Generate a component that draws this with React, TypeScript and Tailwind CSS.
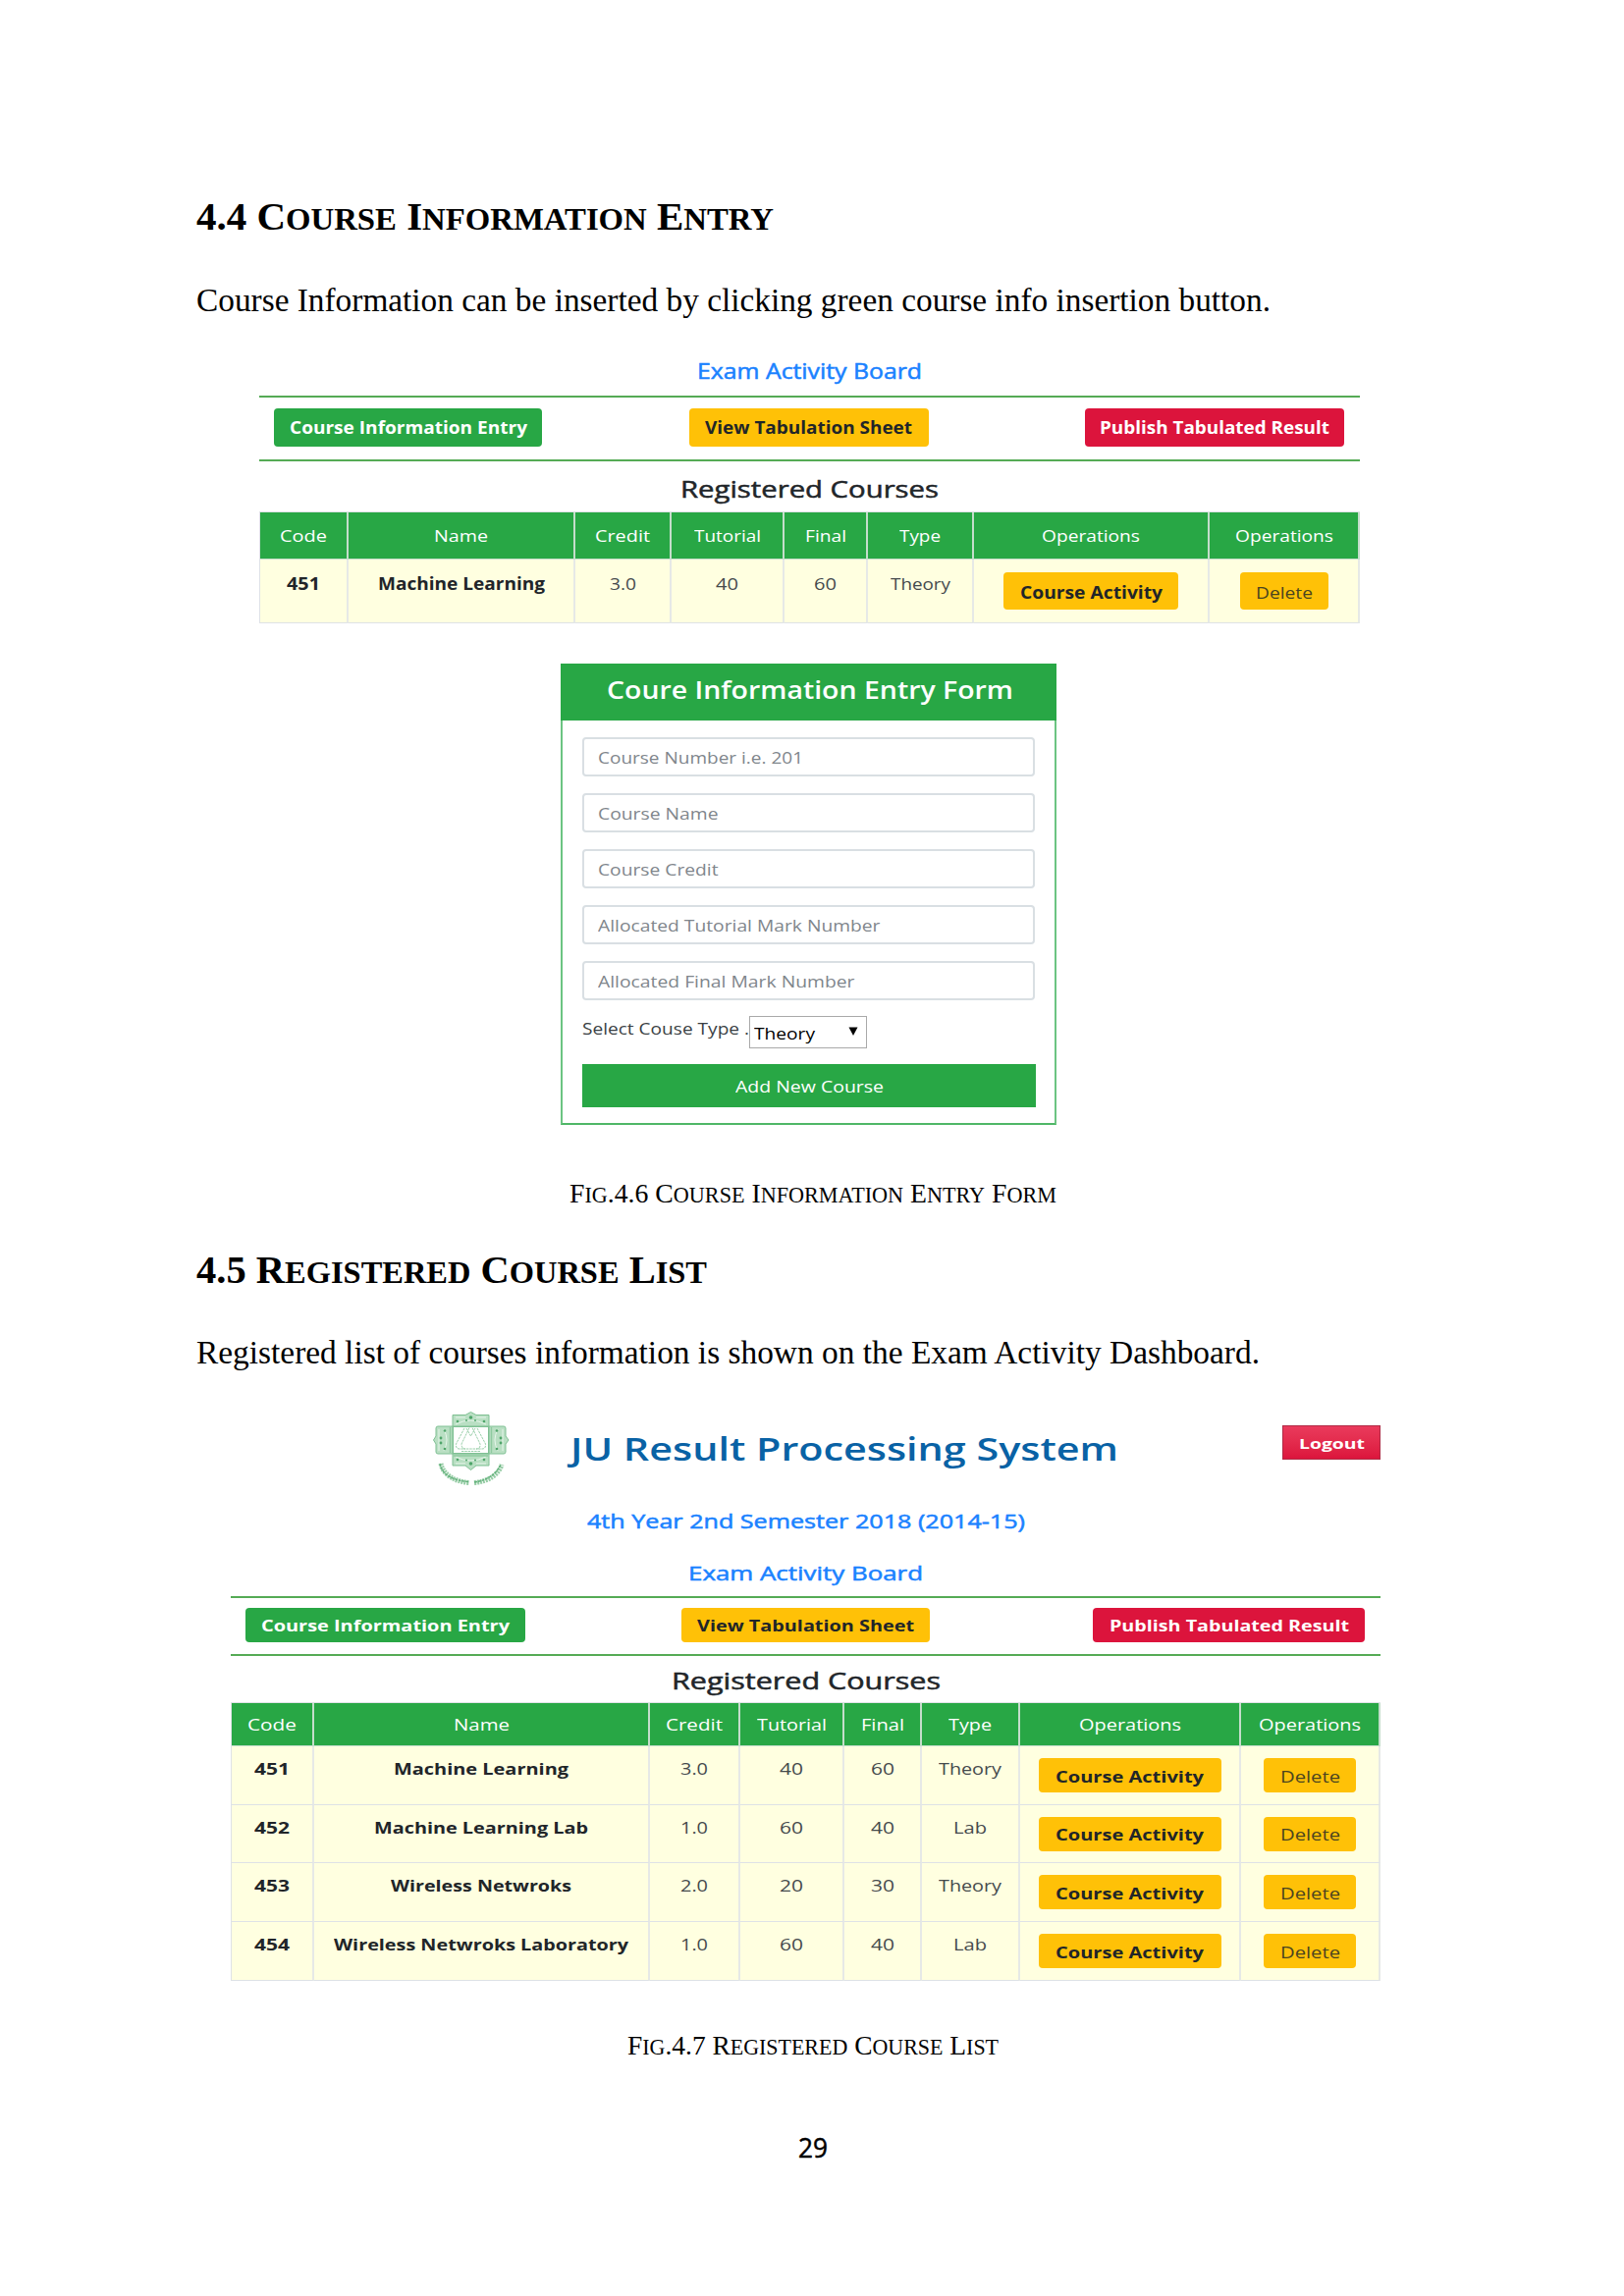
import { useLayoutEffect, useRef, useState } from "react";
import type { ReactNode } from "react";

/** Single line of text stretched horizontally to an exact width. */
function Fit({ w, children }: { w: number; children: ReactNode }) {
  const ref = useRef<HTMLSpanElement>(null);
  const [k, setK] = useState(1);
  useLayoutEffect(() => {
    if (ref.current) setK(w / ref.current.getBoundingClientRect().width);
    // measured once, while the scale is still 1
  }, []);
  return (
    <span className="inline-block text-left whitespace-nowrap" style={{ width: w }}>
      <span ref={ref} className="inline-block origin-left" style={{ transform: `scaleX(${k})` }}>
        {children}
      </span>
    </span>
  );
}

/** Capitals with the lower-case letters as smaller capitals. */
function SmallCaps({ text }: { text: string }) {
  const parts = text.match(/[a-z]+|[^a-z]+/g) ?? [];
  return (
    <>
      {parts.map((p, i) =>
        /[a-z]/.test(p) ? (
          <span key={i} className="text-[0.8em]">
            {p.toUpperCase()}
          </span>
        ) : (
          <span key={i}>{p}</span>
        ),
      )}
    </>
  );
}

const serif = "font-['Liberation_Serif',serif] text-black";
const medium = "[-webkit-text-stroke:0.5px_currentColor]";

function Heading({ text, w, className }: { text: string; w: number; className: string }) {
  return (
    <h2 className={`${serif} ml-[200px] h-[46px] text-[39px] leading-[46px] font-bold ${className}`}>
      <Fit w={w}>
        <SmallCaps text={text} />
      </Fit>
    </h2>
  );
}

function Paragraph({ text, w, className }: { text: string; w: number; className: string }) {
  return (
    <p className={`${serif} ml-[200px] h-[40px] text-[33.3px] leading-[40px] ${className}`}>
      <Fit w={w}>{text}</Fit>
    </p>
  );
}

function Caption({ text, w, className }: { text: string; w: number; className: string }) {
  return (
    <p className={`${serif} h-[34px] pl-px text-center text-[27.8px] leading-[34px] ${className}`}>
      <Fit w={w}>
        <SmallCaps text={text} />
      </Fit>
    </p>
  );
}

type Label = [string, number];

type BoardProps = {
  className: string;
  rule: string;
  button: string;
  buttonWidths: [string, string, string];
  labels: [Label, Label, Label];
  title: string;
  titleWidth: number;
  cols: string;
  headHeight: string;
  head: Label[];
  rowHeight: string;
  textPad: string;
  rows: Label[][];
  activity: string;
  activityWidth: number;
  remove: string;
  removeWidth: number;
};

function Board(p: BoardProps) {
  return (
    <div className={p.className}>
      <div className={`grid grid-cols-3 border-y-2 pr-[16px] pl-[15px] font-bold ${p.rule}`}>
        <button className={`rounded-[4px] bg-[#28a745] text-white ${p.button} ${p.buttonWidths[0]}`}>
          <Fit w={p.labels[0][1]}>{p.labels[0][0]}</Fit>
        </button>
        <button className={`justify-self-center rounded-[4px] bg-[#ffc107] text-[#212529] ${p.button} ${p.buttonWidths[1]}`}>
          <Fit w={p.labels[1][1]}>{p.labels[1][0]}</Fit>
        </button>
        <button className={`justify-self-end rounded-[4px] bg-[#dc143c] text-white ${p.button} ${p.buttonWidths[2]}`}>
          <Fit w={p.labels[2][1]}>{p.labels[2][0]}</Fit>
        </button>
      </div>
      <h4 className={`h-8 text-center leading-8 text-[#212529] ${medium} ${p.title}`}>
        <Fit w={p.titleWidth}>Registered Courses</Fit>
      </h4>
      <div className="border-t border-l border-[#dee2e6]">
        <div className={`grid bg-[#28a745] text-white ${p.cols} ${p.headHeight}`}>
          {p.head.map(([t, w], i) => (
            <div key={i} className="flex items-center justify-center border-r-2 border-b border-[#c4ddcb] pt-px">
              <Fit w={w}>{t}</Fit>
            </div>
          ))}
        </div>
        {p.rows.map((row, r) => (
          <div key={r} className={`grid bg-[#ffffe0] text-[#454a4d] ${p.cols} ${p.rowHeight}`}>
            {row.map(([t, w], i) => (
              <div
                key={i}
                className={`flex items-start justify-center border-r-2 border-b border-r-[#e6e9e6] border-b-[#dee2e6] leading-6 ${p.textPad} ${i < 2 ? "font-bold text-[#212529]" : ""}`}
              >
                <Fit w={w}>{t}</Fit>
              </div>
            ))}
            <div className={`flex items-start justify-center border-r-2 border-b border-r-[#e6e9e6] border-b-[#dee2e6] ${p.textPad}`}>
              <button className={`rounded-[4px] bg-[#ffc107] font-bold text-[#212529] ${p.activity}`}>
                <Fit w={p.activityWidth}>Course Activity</Fit>
              </button>
            </div>
            <div className={`flex items-start justify-center border-r-2 border-b border-r-[#e6e9e6] border-b-[#dee2e6] ${p.textPad}`}>
              <button className={`rounded-[4px] bg-[#ffc107] text-[#4a4420] ${p.remove}`}>
                <Fit w={p.removeWidth}>Delete</Fit>
              </button>
            </div>
          </div>
        ))}
      </div>
    </div>
  );
}

const fields: Label[] = [
  ["Course Number i.e. 201", 209],
  ["Course Name", 122.5],
  ["Course Credit", 122.5],
  ["Allocated Tutorial Mark Number", 287.5],
  ["Allocated Final Mark Number", 261.5],
];

function EntryForm() {
  return (
    <form className="mt-[41px] ml-[571px] h-[470px] w-[505px] border-x-2 border-b-2 border-x-[#6cc482] border-b-[#4fb767] text-[17px]">
      <h3 className="-mx-[2px] h-[58px] bg-[#28a745] pl-[2px] text-center text-[24.5px] leading-[54px] font-semibold text-white">
        <Fit w={414}>Coure Information Entry Form</Fit>
      </h3>
      <div className="mx-5 mt-[17px] flex flex-col gap-[17.2px]">
        {fields.map(([t, w]) => (
          <div
            key={t}
            className="flex h-[39.8px] items-center rounded-[4px] border-2 border-[#d9dfe3] pt-[2px] pl-[14px] text-[#7f868c]"
          >
            <Fit w={w}>{t}</Fit>
          </div>
        ))}
      </div>
      <div className="mx-5 mt-[16px] flex h-[33px] items-start text-[#3a3f44]">
        <span className="mt-px leading-6">
          <Fit w={170}>Select Couse Type .</Fit>
        </span>
        <div className="flex h-[33px] w-[120px] items-center justify-between border-[1.5px] border-[#a9a9a9] bg-white pt-[4px] pr-2 pl-1 text-black">
          <Fit w={62}>Theory</Fit>
          <svg viewBox="0 0 10 9" className="mb-[5px] h-[9px] w-[10px]">
            <path d="M0.500 0.500H9.500L5 9Z" />
          </svg>
        </div>
      </div>
      <button type="button" className="mt-[16px] ml-[19.5px] h-[44px] w-[462px] bg-[#28a745] pt-[3px] pl-px text-white">
        <Fit w={151}>Add New Course</Fit>
      </button>
    </form>
  );
}

function Crest() {
  return (
    <svg viewBox="0 0 78 76" className="h-[76px] w-[78px]" fill="none" stroke="#7fc093">
      <g fill="#b9dfc3" strokeWidth="1">
        <path d="M20 3.5H33L38.5 0.5L44 3.5H57V15H20Z" />
        <path d="M20 43H57V55H44L38.5 59.5L33 55H20Z" />
        <path d="M20 15V43H5Q3 43 3 41V33L0.5 29L3 25V17Q3 15 5 15Z" />
        <path d="M57 15V43H72Q74 43 74 41V33L77 29L74 25V17Q74 15 72 15Z" />
      </g>
      <rect x="20.5" y="15.5" width="36" height="27" fill="#fff" />
      <g stroke="#e6f5ea" strokeWidth="1">
        <path d="M23 6H33M44 6H54M23 13Q38 5 54 13M23 46Q38 54 54 46M23 53H33M44 53H54" />
        <path d="M6 18V40M11 18Q17 29 11 40M71 18V40M66 18Q60 29 66 40" />
      </g>
      <path d="M17.5 16V42M59.5 16V42M21 45H56" stroke="#8fcaa0" strokeWidth="1.4" />
      <g fill="#4fa56a" stroke="none">
        <circle cx="25" cy="10" r="1.3" />
        <circle cx="52" cy="10" r="1.3" />
        <circle cx="38.5" cy="6" r="1.8" />
        <circle cx="34" cy="9" r="1" />
        <circle cx="43" cy="9" r="1" />
        <circle cx="25" cy="49" r="1.3" />
        <circle cx="52" cy="49" r="1.3" />
        <circle cx="38.5" cy="53" r="1.8" />
        <circle cx="34" cy="49.5" r="1" />
        <circle cx="43" cy="49.5" r="1" />
        <circle cx="12" cy="19.5" r="1.3" />
        <circle cx="8" cy="27" r="1.4" />
        <circle cx="8" cy="32" r="1.4" />
        <circle cx="12" cy="38" r="1.3" />
        <circle cx="65" cy="19.5" r="1.3" />
        <circle cx="69" cy="27" r="1.4" />
        <circle cx="69" cy="32" r="1.4" />
        <circle cx="65" cy="38" r="1.3" />
      </g>
      <g stroke="#8fcaa0" strokeWidth="0.9" strokeDasharray="2.5 0.8">
        <path d="M32 17L23.5 33Q23 38 27 38H33M45 17L53.5 33Q54 38 50 38H44" />
        <path d="M37 16.5L29 33Q29 38 33 38H44Q48.5 38 48 33L40 16.5" />
        <path d="M34 17L38.5 25L43 17M29 40.5H48" />
      </g>
      <g strokeWidth="5">
        <path d="M8 53C10 64 22 71.5 37 72.5" stroke="#97cda6" strokeDasharray="2 0.9" />
        <path d="M42 72.5C57 71 67 64 70 54" stroke="#97cda6" strokeDasharray="2 0.9" />
      </g>
      <g stroke="#62b07a" strokeWidth="1.4">
        <path d="M7 53C9.5 65 21 70.5 37 71.5" strokeDasharray="3 0.8" />
        <path d="M42 72C56 70 65 63 69 54" strokeDasharray="3 0.8" />
      </g>
    </svg>
  );
}

export default function App() {
  return (
    <div className="flex h-[2339px] w-[1654px] flex-col overflow-hidden bg-white font-['Open_Sans','Noto_Sans',sans-serif]">
      <Heading text="4.4 Course Information Entry" w={588} className="mt-[198px]" />
      <Paragraph
        text="Course Information can be inserted by clicking green course info insertion button."
        w={1094}
        className="mt-[42px]"
      />
      <h4 className={`mt-[38px] ml-[264px] h-7 w-[1121px] text-center text-[21px] leading-7 text-[#1a82ff] ${medium}`}>
        <Fit w={229}>Exam Activity Board</Fit>
      </h4>
      <Board
        className="mt-[11px] ml-[264px] w-[1121px] text-[17px]"
        rule="h-[67px] border-[#55ab55] pt-[11px]"
        button="h-[39px]"
        buttonWidths={["w-[273px]", "w-[244px]", "w-[264px]"]}
        labels={[
          ["Course Information Entry", 242],
          ["View Tabulation Sheet", 211],
          ["Publish Tabulated Result", 234],
        ]}
        title="mt-[12px] mb-[7px] text-[24.5px]"
        titleWidth={263}
        cols="grid-cols-[90px_231px_98px_115px_85px_108px_240px_153px]"
        headHeight="h-[48px]"
        head={[
          ["Code", 48],
          ["Name", 55],
          ["Credit", 56],
          ["Tutorial", 68],
          ["Final", 42],
          ["Type", 42],
          ["Operations", 100],
          ["Operations", 100],
        ]}
        rowHeight="h-[65px]"
        textPad="pt-[13px]"
        rows={[
          [
            ["451", 34],
            ["Machine Learning", 170],
            ["3.0", 27],
            ["40", 23],
            ["60", 23],
            ["Theory", 61],
          ],
        ]}
        activity="h-[38px] w-[178px] pt-[3px]"
        activityWidth={145}
        remove="h-[38px] w-[90px] pt-[3px]"
        removeWidth={58}
      />
      <EntryForm />
      <Caption text="Fig.4.6 Course Information Entry Form" w={496} className="mt-[53px]" />
      <Heading text="4.5 Registered Course List" w={520} className="mt-[38px]" />
      <Paragraph
        text="Registered list of courses information is shown on the Exam Activity Dashboard."
        w={1083}
        className="mt-[41px]"
      />
      <header className="mt-[40px] ml-[441px] flex h-[76px] w-[965px] items-start">
        <Crest />
        <h1 className="mt-[18px] ml-[62px] text-[32px] leading-10 font-semibold text-[#0962a5]">
          <Fit w={558}>JU Result Processing System</Fit>
        </h1>
        <button className="mt-[14px] ml-auto h-[35px] w-[100px] border-[1.5px] border-[#b02a45] bg-linear-to-b from-[#ea3a5c] to-[#dc143c] pt-px text-[15px] font-bold text-white">
          <Fit w={67}>Logout</Fit>
        </button>
      </header>
      <h4 className={`mt-[23px] ml-[235px] h-[26px] w-[1171px] text-center text-[19.5px] leading-[26px] text-[#1a82ff] ${medium}`}>
        <Fit w={446}>4th Year 2nd Semester 2018 (2014-15)</Fit>
      </h4>
      <h4 className={`mt-[27px] ml-[235px] h-[26px] w-[1171px] text-center text-[20px] leading-[26px] text-[#1a82ff] ${medium}`}>
        <Fit w={239}>Exam Activity Board</Fit>
      </h4>
      <Board
        className="mt-[10px] ml-[235px] w-[1171px] text-[16px]"
        rule="h-[61px] border-[#55ab55] pt-[10px]"
        button="h-[35px]"
        buttonWidths={["w-[285px]", "w-[253px]", "w-[277px]"]}
        labels={[
          ["Course Information Entry", 253],
          ["View Tabulation Sheet", 221],
          ["Publish Tabulated Result", 244],
        ]}
        title="mt-[9px] mb-[6px] text-[23px]"
        titleWidth={274}
        cols="grid-cols-[84px_342px_92px_106px_79px_100px_225px_142px]"
        headHeight="h-[44px]"
        head={[
          ["Code", 50],
          ["Name", 57],
          ["Credit", 58],
          ["Tutorial", 71],
          ["Final", 44],
          ["Type", 44],
          ["Operations", 104],
          ["Operations", 104],
        ]}
        rowHeight="h-[59.7px]"
        textPad="pt-[11px]"
        rows={[
          [["451", 36], ["Machine Learning", 178], ["3.0", 28], ["40", 24], ["60", 24], ["Theory", 64]],
          [["452", 36], ["Machine Learning Lab", 218], ["1.0", 28], ["60", 24], ["40", 24], ["Lab", 34]],
          [["453", 36], ["Wireless Netwroks", 184], ["2.0", 28], ["20", 24], ["30", 24], ["Theory", 64]],
          [["454", 36], ["Wireless Netwroks Laboratory", 300], ["1.0", 28], ["60", 24], ["40", 24], ["Lab", 34]],
        ]}
        activity="mt-px h-[35px] w-[186px] pt-[2px]"
        activityWidth={151}
        remove="mt-px h-[35px] w-[94px] pt-[2px]"
        removeWidth={61}
      />
      <Caption text="Fig.4.7 Registered Course List" w={378} className="mt-[49px]" />
      <footer className={`mt-[68px] h-9 pl-px text-center text-[28px] leading-9 text-black ${medium}`}>
        <Fit w={30}>29</Fit>
      </footer>
    </div>
  );
}
